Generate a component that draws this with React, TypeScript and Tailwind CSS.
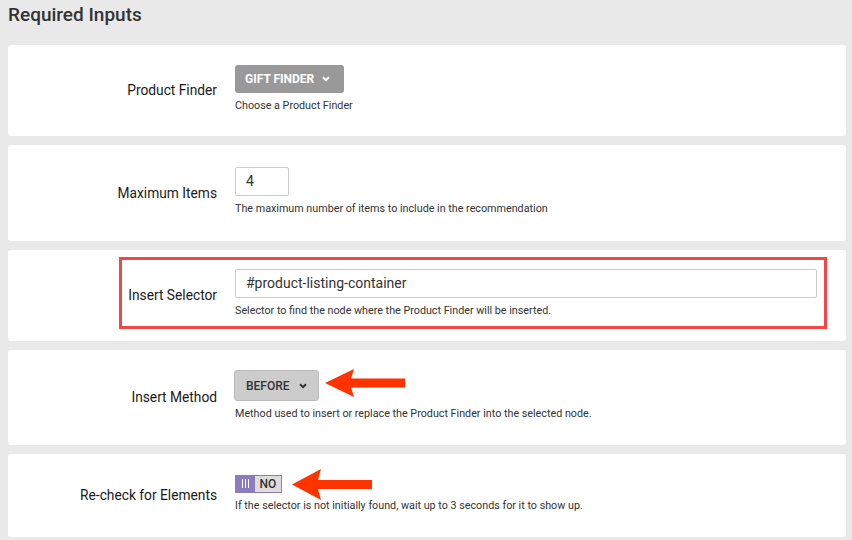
import React from 'react';

const Chevron: React.FC<{ className?: string }> = ({ className }) => (
    <svg width="8" height="6" viewBox="0 0 8 6" className={className}>
        <path d="M1 1.2 L4 4.2 L7 1.2" fill="none" stroke="currentColor" strokeWidth="2" />
    </svg>
);

const Arrow: React.FC<{ className?: string; h: number }> = ({ className, h }) => {
    const mid = h / 2;
    const points = `0,${mid} 29,0 26,${mid - 4.5} 80,${mid - 4.5} 80,${mid + 4.5} 26,${mid + 4.5} 29,${h}`;
    return (
        <svg width="80" height={h} viewBox={`0 0 80 ${h}`} className={className}>
            <polygon points={points} fill="#ff3300" />
        </svg>
    );
};

const Row: React.FC<{ label: string; height: string; help: string; children: React.ReactNode; extra?: React.ReactNode }> = ({
    label,
    height,
    help,
    children,
    extra
}) => (
    <div className={`relative bg-white rounded-[3px] flex items-center ${height}`}>
        <div className="w-[209px] text-right text-[13.75px] text-[#1a1a1a]">{label}</div>
        <div className="ml-[18px] flex-1 pr-[29px]">
            {children}
            <p className="mt-[5px] mb-[4px] text-[10.75px] leading-[15px] text-[#333]">{help}</p>
        </div>
        {extra}
    </div>
);

export default function App() {
    return (
        <div className="min-h-screen bg-[#e9e9e9] pl-2 pr-[6px] font-['Roboto','Liberation_Sans',sans-serif]">
            <h2 className="h-[45px] text-[19px] leading-[29px] font-medium text-[#333]">Required Inputs</h2>

            <div className="flex flex-col gap-[9px]">
                <Row label="Product Finder" height="h-[91px]" help="Choose a Product Finder">
                    <button className="h-[28px] w-[109px] pl-[10px] bg-[#999] rounded-[3px] text-white text-[12px] font-bold flex items-center gap-[8px]">
                        GIFT FINDER
                        <Chevron />
                    </button>
                </Row>

                <Row label="Maximum Items" height="h-[96px]" help="The maximum number of items to include in the recommendation">
                    <div className="w-[54px] h-[29px] border border-[#ccc] rounded-[2px] px-[10px] flex items-center text-[14px] text-[#333]">
                        4
                    </div>
                </Row>

                <Row
                    label="Insert Selector"
                    height="h-[91px]"
                    help="Selector to find the node where the Product Finder will be inserted."
                    extra={<div className="absolute left-[111px] top-[7px] right-[19px] bottom-[12px] border-[3px] border-[#f44848] pointer-events-none" />}
                >
                    <div className="h-[29px] border border-[#ccc] rounded-[2px] px-[10px] flex items-center text-[14px] text-[#333]">
                        #product-listing-container
                    </div>
                </Row>

                <Row
                    label="Insert Method"
                    height="h-[95px]"
                    help="Method used to insert or replace the Product Finder into the selected node."
                    extra={<Arrow h={28} className="absolute left-[317px] top-[19px]" />}
                >
                    <button className="h-[31px] w-[85px] -ml-px pl-[11px] bg-[#ccc] border border-[#bbb] rounded-[3px] text-[#333] text-[12px] font-medium flex items-center gap-[9px]">
                        BEFORE
                        <Chevron />
                    </button>
                </Row>

                <Row
                    label="Re-check for Elements"
                    height="h-[83px]"
                    help="If the selector is not initially found, wait up to 3 seconds for it to show up."
                    extra={<Arrow h={31} className="absolute left-[284px] top-[15px]" />}
                >
                    <div className="w-[47px] h-[18px] border border-[#8b7cc0] flex">
                        <div className="w-[19px] bg-[#8b7cc0] flex items-center justify-center gap-[2px]">
                            <span className="w-px h-[9px] bg-white" />
                            <span className="w-px h-[9px] bg-white" />
                            <span className="w-px h-[9px] bg-white" />
                        </div>
                        <div className="flex-1 bg-[#ddd] flex items-center justify-center text-[12px] font-medium text-[#333]">NO</div>
                    </div>
                </Row>
            </div>
        </div>
    );
}
